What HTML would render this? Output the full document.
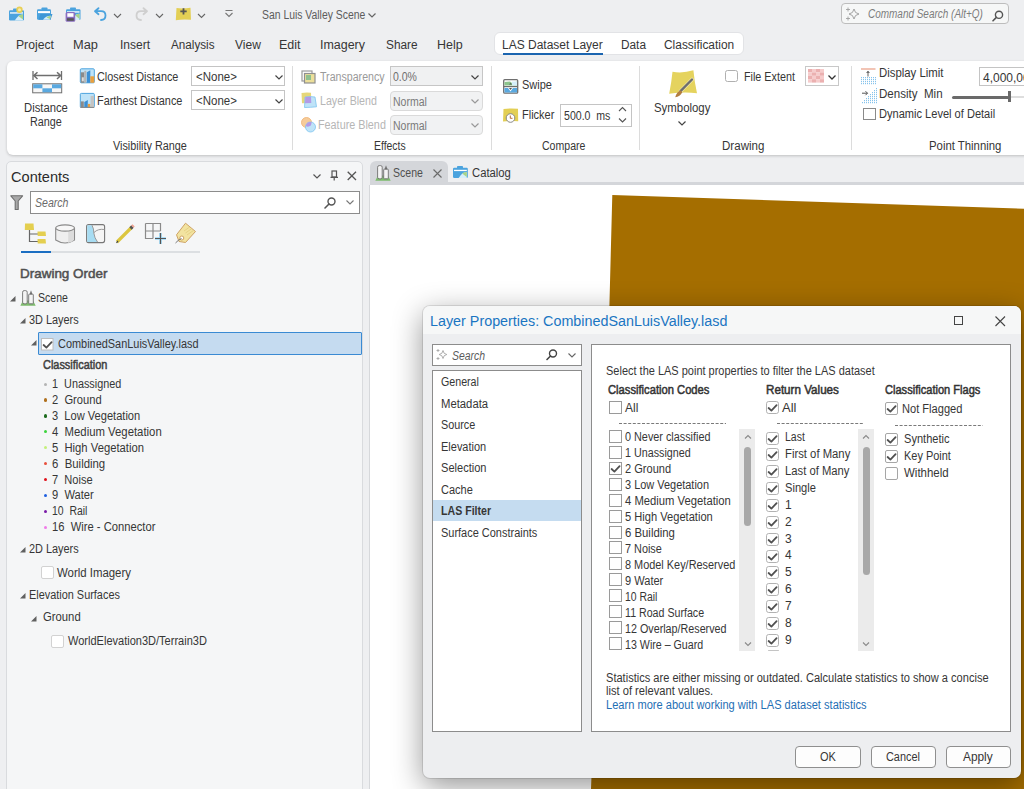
<!DOCTYPE html>
<html><head><meta charset="utf-8"><style>
html,body{margin:0;padding:0;}
body{width:1024px;height:789px;overflow:hidden;position:relative;background:#eeeff1;font-family:"Liberation Sans",sans-serif;}
.a{position:absolute;}
.t{white-space:pre;}
svg{overflow:visible}
</style></head><body>
<svg class="a" style="left:261.50px;top:1px;" width="139" height="24"><text x="0" y="18" style="white-space:pre" font-size="12" fill="#5c5c5c" textLength="103.30" lengthAdjust="spacingAndGlyphs">San Luis Valley Scene</text></svg>
<svg class="a" style="left:368px;top:13px" width="8" height="5" viewBox="0 0 8 5"><path d="M0.5 0.5 L4 4 L7.5 0.5" fill="none" stroke="#666" stroke-width="1.2"/></svg>
<div class="a" style="left:841px;top:3px;width:168px;height:21px;box-sizing:border-box;border:1px solid #bdbdbd;border-radius:4px;background:#f6f7f7;"></div>
<svg class="a" style="left:867.90px;top:0px;" width="158" height="24"><text x="0" y="18" style="white-space:pre" font-size="12" fill="#7c7c7c" font-style="italic" textLength="114.90" lengthAdjust="spacingAndGlyphs">Command Search (Alt+Q)</text></svg>
<svg class="a" style="left:16.10px;top:31px;" width="58" height="24"><text x="0" y="18" style="white-space:pre" font-size="12" fill="#363636" textLength="37.90" lengthAdjust="spacingAndGlyphs">Project</text></svg>
<svg class="a" style="left:73.10px;top:31px;" width="45" height="24"><text x="0" y="18" style="white-space:pre" font-size="12" fill="#363636" textLength="24.90" lengthAdjust="spacingAndGlyphs">Map</text></svg>
<svg class="a" style="left:119.60px;top:31px;" width="50" height="24"><text x="0" y="18" style="white-space:pre" font-size="12" fill="#363636">Insert</text></svg>
<svg class="a" style="left:170.80px;top:31px;" width="65" height="24"><text x="0" y="18" style="white-space:pre" font-size="12" fill="#363636" textLength="43.50" lengthAdjust="spacingAndGlyphs">Analysis</text></svg>
<svg class="a" style="left:234.50px;top:31px;" width="46" height="24"><text x="0" y="18" style="white-space:pre" font-size="12" fill="#363636">View</text></svg>
<svg class="a" style="left:279.30px;top:31px;" width="42" height="24"><text x="0" y="18" style="white-space:pre" font-size="12" fill="#363636" textLength="21.60" lengthAdjust="spacingAndGlyphs">Edit</text></svg>
<svg class="a" style="left:320.30px;top:31px;" width="65" height="24"><text x="0" y="18" style="white-space:pre" font-size="12" fill="#363636" textLength="45.00" lengthAdjust="spacingAndGlyphs">Imagery</text></svg>
<svg class="a" style="left:385.90px;top:31px;" width="52" height="24"><text x="0" y="18" style="white-space:pre" font-size="12" fill="#363636" textLength="31.60" lengthAdjust="spacingAndGlyphs">Share</text></svg>
<svg class="a" style="left:436.70px;top:31px;" width="46" height="24"><text x="0" y="18" style="white-space:pre" font-size="12" fill="#363636" textLength="25.70" lengthAdjust="spacingAndGlyphs">Help</text></svg>
<div class="a" style="left:494px;top:32px;width:250px;height:23px;box-sizing:border-box;border:1px solid #e2e3e6;border-radius:6px;background:#fff;"></div>
<svg class="a" style="left:501.80px;top:31px;" width="121" height="24"><text x="0" y="18" style="white-space:pre" font-size="12" fill="#363636">LAS Dataset Layer</text></svg>
<div class="a" style="left:502.5px;top:53px;width:100.5px;height:2px;background:#1b65b0;"></div>
<svg class="a" style="left:620.80px;top:31px;" width="45" height="24"><text x="0" y="18" style="white-space:pre" font-size="12" fill="#363636" textLength="25.00" lengthAdjust="spacingAndGlyphs">Data</text></svg>
<svg class="a" style="left:663.80px;top:31px;" width="91" height="24"><text x="0" y="18" style="white-space:pre" font-size="12" fill="#363636" textLength="70.20" lengthAdjust="spacingAndGlyphs">Classification</text></svg>
<div class="a" style="left:7px;top:60.5px;width:1040px;height:94px;background:#fff;border-radius:6px;box-shadow:0 1px 3px rgba(0,0,0,0.2);"></div>
<div class="a" style="left:292px;top:66px;width:1px;height:84px;background:#dcdcdc;"></div>
<div class="a" style="left:491px;top:66px;width:1px;height:84px;background:#dcdcdc;"></div>
<div class="a" style="left:639px;top:66px;width:1px;height:84px;background:#dcdcdc;"></div>
<div class="a" style="left:851px;top:66px;width:1px;height:84px;background:#dcdcdc;"></div>
<svg class="a" style="left:24.10px;top:94px;" width="67" height="24"><text x="0" y="18" style="white-space:pre" font-size="12" fill="#363636" textLength="43.90" lengthAdjust="spacingAndGlyphs">Distance</text></svg>
<svg class="a" style="left:30.10px;top:108px;" width="55" height="24"><text x="0" y="18" style="white-space:pre" font-size="12" fill="#363636" textLength="31.90" lengthAdjust="spacingAndGlyphs">Range</text></svg>
<svg class="a" style="left:96.60px;top:63px;" width="110" height="24"><text x="0" y="18" style="white-space:pre" font-size="12" fill="#363636" textLength="81.40" lengthAdjust="spacingAndGlyphs">Closest Distance</text></svg>
<svg class="a" style="left:96.60px;top:87px;" width="114" height="24"><text x="0" y="18" style="white-space:pre" font-size="12" fill="#363636" textLength="85.40" lengthAdjust="spacingAndGlyphs">Farthest Distance</text></svg>
<svg class="a" style="left:113.10px;top:132px;" width="102" height="24"><text x="0" y="18" style="white-space:pre" font-size="12" fill="#363636" textLength="73.90" lengthAdjust="spacingAndGlyphs">Visibility Range</text></svg>
<div class="a" style="left:191px;top:66px;width:94px;height:20px;box-sizing:border-box;border:1px solid #c4c4c4;background:#fff;"></div>
<div class="a" style="left:191px;top:90px;width:94px;height:20px;box-sizing:border-box;border:1px solid #c4c4c4;background:#fff;"></div>
<svg class="a" style="left:196.40px;top:63px;" width="63" height="24"><text x="0" y="18" style="white-space:pre" font-size="12" fill="#363636" textLength="40.90" lengthAdjust="spacingAndGlyphs">&lt;None&gt;</text></svg>
<svg class="a" style="left:196.40px;top:87px;" width="63" height="24"><text x="0" y="18" style="white-space:pre" font-size="12" fill="#363636" textLength="40.90" lengthAdjust="spacingAndGlyphs">&lt;None&gt;</text></svg>
<svg class="a" style="left:320.10px;top:63px;" width="93" height="24"><text x="0" y="18" style="white-space:pre" font-size="12" fill="#9a9a9a" textLength="64.60" lengthAdjust="spacingAndGlyphs">Transparency</text></svg>
<div class="a" style="left:390px;top:65.5px;width:93px;height:20.5px;box-sizing:border-box;border:1px solid #c6c6c6;background:#f0f1f2;"></div>
<svg class="a" style="left:393.40px;top:63px;" width="47" height="24"><text x="0" y="18" style="white-space:pre" font-size="12" fill="#6e6e6e" textLength="23.90" lengthAdjust="spacingAndGlyphs">0.0%</text></svg>
<svg class="a" style="left:320.10px;top:87px;" width="84" height="24"><text x="0" y="18" style="white-space:pre" font-size="12" fill="#b6b6b6" textLength="56.90" lengthAdjust="spacingAndGlyphs">Layer Blend</text></svg>
<div class="a" style="left:390px;top:91px;width:93px;height:19.5px;box-sizing:border-box;border:1px solid #dadada;border-radius:4px;background:#f1f2f3;"></div>
<svg class="a" style="left:392.60px;top:88px;" width="59" height="24"><text x="0" y="18" style="white-space:pre" font-size="12" fill="#7a7a7a" textLength="33.90" lengthAdjust="spacingAndGlyphs">Normal</text></svg>
<svg class="a" style="left:317.60px;top:111px;" width="95" height="24"><text x="0" y="18" style="white-space:pre" font-size="12" fill="#b6b6b6" textLength="67.90" lengthAdjust="spacingAndGlyphs">Feature Blend</text></svg>
<div class="a" style="left:390px;top:115px;width:93px;height:19.5px;box-sizing:border-box;border:1px solid #dadada;border-radius:4px;background:#f1f2f3;"></div>
<svg class="a" style="left:392.60px;top:112px;" width="59" height="24"><text x="0" y="18" style="white-space:pre" font-size="12" fill="#7a7a7a" textLength="33.90" lengthAdjust="spacingAndGlyphs">Normal</text></svg>
<svg class="a" style="left:374.40px;top:132px;" width="56" height="24"><text x="0" y="18" style="white-space:pre" font-size="12" fill="#363636" textLength="31.60" lengthAdjust="spacingAndGlyphs">Effects</text></svg>
<svg class="a" style="left:522.10px;top:71px;" width="53" height="24"><text x="0" y="18" style="white-space:pre" font-size="12" fill="#363636" textLength="29.90" lengthAdjust="spacingAndGlyphs">Swipe</text></svg>
<svg class="a" style="left:522.10px;top:101px;" width="55" height="24"><text x="0" y="18" style="white-space:pre" font-size="12" fill="#363636" textLength="32.40" lengthAdjust="spacingAndGlyphs">Flicker</text></svg>
<div class="a" style="left:560px;top:104px;width:71.5px;height:22.5px;box-sizing:border-box;border:1px solid #c4c4c4;background:#fff;"></div>
<svg class="a" style="left:564.10px;top:102px;" width="73" height="24"><text x="0" y="18" style="white-space:pre" font-size="12" fill="#363636" textLength="46.40" lengthAdjust="spacingAndGlyphs">500.0  ms</text></svg>
<svg class="a" style="left:541.60px;top:132px;" width="69" height="24"><text x="0" y="18" style="white-space:pre" font-size="12" fill="#363636" textLength="43.40" lengthAdjust="spacingAndGlyphs">Compare</text></svg>
<svg class="a" style="left:654.10px;top:94px;" width="79" height="24"><text x="0" y="18" style="white-space:pre" font-size="12" fill="#363636" textLength="56.40" lengthAdjust="spacingAndGlyphs">Symbology</text></svg>
<div class="a" style="left:725.3px;top:69.5px;width:12.7px;height:12.7px;box-sizing:border-box;border:1px solid #b0b0b0;background:#fff;border-radius:2.5px;"></div>
<svg class="a" style="left:743.60px;top:63px;" width="77" height="24"><text x="0" y="18" style="white-space:pre" font-size="12" fill="#363636" textLength="50.90" lengthAdjust="spacingAndGlyphs">File Extent</text></svg>
<div class="a" style="left:805px;top:66px;width:33.5px;height:19.5px;box-sizing:border-box;border:1px solid #c8c8c8;background:#fff;"></div>
<svg class="a" style="left:722.10px;top:132px;" width="64" height="24"><text x="0" y="18" style="white-space:pre" font-size="12" fill="#363636" textLength="42.40" lengthAdjust="spacingAndGlyphs">Drawing</text></svg>
<svg class="a" style="left:879.10px;top:59px;" width="88" height="24"><text x="0" y="18" style="white-space:pre" font-size="12" fill="#363636" textLength="64.40" lengthAdjust="spacingAndGlyphs">Display Limit</text></svg>
<svg class="a" style="left:879.10px;top:80px;" width="86" height="24"><text x="0" y="18" style="white-space:pre" font-size="12" fill="#363636" textLength="63.60" lengthAdjust="spacingAndGlyphs">Density  Min</text></svg>
<div class="a" style="left:863px;top:107.5px;width:13px;height:12.5px;box-sizing:border-box;border:1px solid #8a8a8a;background:#fff;"></div>
<svg class="a" style="left:879.10px;top:100px;" width="146" height="24"><text x="0" y="18" style="white-space:pre" font-size="12" fill="#363636" textLength="116.20" lengthAdjust="spacingAndGlyphs">Dynamic Level of Detail</text></svg>
<div class="a" style="left:979px;top:66.8px;width:60px;height:19.5px;box-sizing:border-box;border:1px solid #c4c4c4;background:#fff;"></div>
<svg class="a" style="left:983.10px;top:64px;" width="73" height="24"><text x="0" y="18" style="white-space:pre" font-size="12" fill="#363636">4,000,000</text></svg>
<div class="a" style="left:952px;top:95.5px;width:57px;height:3px;background:#6a6a6a;border-radius:1.5px;"></div>
<div class="a" style="left:1010px;top:96px;width:20px;height:2px;background:#dedede;"></div>
<div class="a" style="left:1008px;top:91px;width:3.2px;height:11.2px;background:#6a6a6a;"></div>
<svg class="a" style="left:928.60px;top:132px;" width="96" height="24"><text x="0" y="18" style="white-space:pre" font-size="12" fill="#363636" textLength="72.40" lengthAdjust="spacingAndGlyphs">Point Thinning</text></svg>
<div class="a" style="left:6px;top:161px;width:357px;height:640px;box-sizing:border-box;border:1px solid #d9dbde;border-radius:5px 5px 0 0;background:#f5f6f7;"></div>
<svg class="a" style="left:11.30px;top:160px;" width="80" height="30"><text x="0" y="22" style="white-space:pre" font-size="15" fill="#2b2b2b" textLength="58.40" lengthAdjust="spacingAndGlyphs">Contents</text></svg>
<div class="a" style="left:30px;top:191px;width:330px;height:22.5px;box-sizing:border-box;border:1px solid #8c8c8c;background:#fff;"></div>
<svg class="a" style="left:34.50px;top:189px;" width="58" height="24"><text x="0" y="18" style="white-space:pre" font-size="12" fill="#6a6a6a" font-style="italic" textLength="33.50" lengthAdjust="spacingAndGlyphs">Search</text></svg>
<div class="a" style="left:20.6px;top:250.8px;width:30px;height:2.5px;background:#1b6ec2;"></div>
<div class="a" style="left:50.6px;top:251px;width:149.4px;height:2px;background:#dcdfe2;"></div>
<svg class="a" style="left:19.90px;top:259px;" width="108" height="26"><text x="0" y="19" style="white-space:pre" font-size="13" fill="#505050" textLength="87.50" lengthAdjust="spacingAndGlyphs" stroke="#505050" stroke-width="0.5">Drawing Order</text></svg>
<svg class="a" style="left:38.40px;top:284px;" width="54" height="24"><text x="0" y="18" style="white-space:pre" font-size="12" fill="#363636" textLength="29.90" lengthAdjust="spacingAndGlyphs">Scene</text></svg>
<svg class="a" style="left:29.10px;top:306px;" width="75" height="24"><text x="0" y="18" style="white-space:pre" font-size="12" fill="#363636" textLength="49.70" lengthAdjust="spacingAndGlyphs">3D Layers</text></svg>
<div class="a" style="left:38.2px;top:331.6px;width:323.5px;height:23px;box-sizing:border-box;border:1px solid #3a8ad3;background:#c5dbf0;border-radius:1px;"></div>
<svg class="a" style="left:57.50px;top:330px;" width="174" height="24"><text x="0" y="18" style="white-space:pre" font-size="12" fill="#363636" textLength="140.50" lengthAdjust="spacingAndGlyphs">CombinedSanLuisValley.lasd</text></svg>
<svg class="a" style="left:42.70px;top:351px;" width="91" height="24"><text x="0" y="18" style="white-space:pre" font-size="12" fill="#404040" textLength="64.30" lengthAdjust="spacingAndGlyphs" stroke="#404040" stroke-width="0.5">Classification</text></svg>
<div class="a" style="left:44px;top:382.6px;width:3.2px;height:3.2px;background:#b4b4b4;border-radius:50%;"></div>
<svg class="a" style="left:52.10px;top:370px;" width="97" height="24"><text x="0" y="18" style="white-space:pre" font-size="12" fill="#363636" textLength="69.30" lengthAdjust="spacingAndGlyphs">1  Unassigned</text></svg>
<div class="a" style="left:44px;top:398.40000000000003px;width:3.2px;height:3.2px;background:#b0701d;border-radius:50%;"></div>
<svg class="a" style="left:52.10px;top:386px;" width="73" height="24"><text x="0" y="18" style="white-space:pre" font-size="12" fill="#363636" textLength="49.70" lengthAdjust="spacingAndGlyphs">2  Ground</text></svg>
<div class="a" style="left:44px;top:414.40000000000003px;width:3.2px;height:3.2px;background:#1d6b1d;border-radius:50%;"></div>
<svg class="a" style="left:52.10px;top:402px;" width="115" height="24"><text x="0" y="18" style="white-space:pre" font-size="12" fill="#363636" textLength="88.20" lengthAdjust="spacingAndGlyphs">3  Low Vegetation</text></svg>
<div class="a" style="left:44px;top:430.3px;width:3.2px;height:3.2px;background:#3cd43c;border-radius:50%;"></div>
<svg class="a" style="left:52.10px;top:418px;" width="136" height="24"><text x="0" y="18" style="white-space:pre" font-size="12" fill="#363636" textLength="109.70" lengthAdjust="spacingAndGlyphs">4  Medium Vegetation</text></svg>
<div class="a" style="left:44px;top:446.2px;width:3.2px;height:3.2px;background:#c4f07a;border-radius:50%;"></div>
<svg class="a" style="left:52.10px;top:434px;" width="118" height="24"><text x="0" y="18" style="white-space:pre" font-size="12" fill="#363636" textLength="91.90" lengthAdjust="spacingAndGlyphs">5  High Vegetation</text></svg>
<div class="a" style="left:44px;top:462.1px;width:3.2px;height:3.2px;background:#e8503c;border-radius:50%;"></div>
<svg class="a" style="left:52.10px;top:450px;" width="76" height="24"><text x="0" y="18" style="white-space:pre" font-size="12" fill="#363636" textLength="53.20" lengthAdjust="spacingAndGlyphs">6  Building</text></svg>
<div class="a" style="left:44px;top:478.0px;width:3.2px;height:3.2px;background:#e0101a;border-radius:50%;"></div>
<svg class="a" style="left:52.10px;top:466px;" width="64" height="24"><text x="0" y="18" style="white-space:pre" font-size="12" fill="#363636" textLength="40.70" lengthAdjust="spacingAndGlyphs">7  Noise</text></svg>
<div class="a" style="left:44px;top:493.90000000000003px;width:3.2px;height:3.2px;background:#1e5fe0;border-radius:50%;"></div>
<svg class="a" style="left:52.10px;top:481px;" width="65" height="24"><text x="0" y="18" style="white-space:pre" font-size="12" fill="#363636" textLength="41.70" lengthAdjust="spacingAndGlyphs">9  Water</text></svg>
<div class="a" style="left:44px;top:509.8px;width:3.2px;height:3.2px;background:#7a1aa8;border-radius:50%;"></div>
<svg class="a" style="left:52.10px;top:497px;" width="61" height="24"><text x="0" y="18" style="white-space:pre" font-size="12" fill="#363636" textLength="35.40" lengthAdjust="spacingAndGlyphs">10  Rail</text></svg>
<div class="a" style="left:44px;top:525.8px;width:3.2px;height:3.2px;background:#f07ae8;border-radius:50%;"></div>
<svg class="a" style="left:52.10px;top:513px;" width="131" height="24"><text x="0" y="18" style="white-space:pre" font-size="12" fill="#363636" textLength="103.40" lengthAdjust="spacingAndGlyphs">16  Wire - Connector</text></svg>
<svg class="a" style="left:29.10px;top:535px;" width="75" height="24"><text x="0" y="18" style="white-space:pre" font-size="12" fill="#363636" textLength="49.70" lengthAdjust="spacingAndGlyphs">2D Layers</text></svg>
<div class="a" style="left:40.5px;top:566px;width:13px;height:13px;box-sizing:border-box;border:1px solid #d2d2d2;background:#fff;border-radius:2px;"></div>
<svg class="a" style="left:56.90px;top:559px;" width="98" height="24"><text x="0" y="18" style="white-space:pre" font-size="12" fill="#363636" textLength="73.90" lengthAdjust="spacingAndGlyphs">World Imagery</text></svg>
<svg class="a" style="left:29.10px;top:581px;" width="120" height="24"><text x="0" y="18" style="white-space:pre" font-size="12" fill="#363636" textLength="90.90" lengthAdjust="spacingAndGlyphs">Elevation Surfaces</text></svg>
<svg class="a" style="left:42.50px;top:603px;" width="60" height="24"><text x="0" y="18" style="white-space:pre" font-size="12" fill="#363636" textLength="37.70" lengthAdjust="spacingAndGlyphs">Ground</text></svg>
<div class="a" style="left:50.6px;top:634.8px;width:13px;height:13px;box-sizing:border-box;border:1px solid #d2d2d2;background:#fff;border-radius:2px;"></div>
<svg class="a" style="left:67.80px;top:627px;" width="171" height="24"><text x="0" y="18" style="white-space:pre" font-size="12" fill="#363636" textLength="138.90" lengthAdjust="spacingAndGlyphs">WorldElevation3D/Terrain3D</text></svg>
<div class="a" style="left:369.5px;top:161.3px;width:78.2px;height:21px;background:#d4d6da;border-radius:6px 6px 0 0;"></div>
<div class="a" style="left:370px;top:182px;width:660px;height:3px;background:#d4d6da;"></div>
<svg class="a" style="left:393.10px;top:159px;" width="54" height="24"><text x="0" y="18" style="white-space:pre" font-size="12" fill="#505050" textLength="29.90" lengthAdjust="spacingAndGlyphs">Scene</text></svg>
<svg class="a" style="left:472.10px;top:159px;" width="61" height="24"><text x="0" y="18" style="white-space:pre" font-size="12" fill="#363636" textLength="38.90" lengthAdjust="spacingAndGlyphs">Catalog</text></svg>
<div class="a" style="left:369px;top:185px;width:660px;height:610px;background:#fff;border-left:1px solid #d6d8db;"></div>
<svg class="a" style="left:0px;top:0px" width="1024" height="789" viewBox="0 0 1024 789"><polygon points="612.3,195 1024,208.8 1024,789 591,789 608.5,340" fill="#a56e00"/></svg>
<div class="a" style="left:422.5px;top:305.5px;width:598.5px;height:472.5px;border-radius:7px;background:#edeef0;box-shadow:0 8px 30px rgba(0,0,0,0.42), 0 0 0 1px rgba(0,0,0,0.10);"></div>
<div class="a" style="left:422.5px;top:305.5px;width:598.5px;height:28.5px;border-radius:7px 7px 0 0;background:#f6f7f7;"></div>
<svg class="a" style="left:430.40px;top:305px;" width="317" height="28"><text x="0" y="21" style="white-space:pre" font-size="14" fill="#1a75c2" textLength="297.40" lengthAdjust="spacingAndGlyphs">Layer Properties: CombinedSanLuisValley.lasd</text></svg>
<div class="a" style="left:953.6px;top:315.8px;width:9.4px;height:9.2px;box-sizing:border-box;border:1px solid #444;"></div>
<div class="a" style="left:432.3px;top:344.2px;width:149.7px;height:22px;box-sizing:border-box;border:1px solid #8c8c8c;background:#fff;"></div>
<svg class="a" style="left:451.70px;top:342px;" width="58" height="24"><text x="0" y="18" style="white-space:pre" font-size="12" fill="#5a5a5a" font-style="italic" textLength="33.10" lengthAdjust="spacingAndGlyphs">Search</text></svg>
<div class="a" style="left:432.3px;top:370px;width:149.7px;height:361.7px;box-sizing:border-box;border:1px solid #8c8c8c;background:#fff;"></div>
<div class="a" style="left:433.3px;top:500.2px;width:147.7px;height:20.4px;background:#c5dcf0;"></div>
<svg class="a" style="left:441.40px;top:368px;" width="63" height="24"><text x="0" y="18" style="white-space:pre" font-size="12" fill="#363636" textLength="37.90" lengthAdjust="spacingAndGlyphs">General</text></svg>
<svg class="a" style="left:441.40px;top:390px;" width="70" height="24"><text x="0" y="18" style="white-space:pre" font-size="12" fill="#363636" textLength="47.10" lengthAdjust="spacingAndGlyphs">Metadata</text></svg>
<svg class="a" style="left:441.40px;top:411px;" width="58" height="24"><text x="0" y="18" style="white-space:pre" font-size="12" fill="#363636" textLength="34.30" lengthAdjust="spacingAndGlyphs">Source</text></svg>
<svg class="a" style="left:441.40px;top:433px;" width="69" height="24"><text x="0" y="18" style="white-space:pre" font-size="12" fill="#363636" textLength="45.20" lengthAdjust="spacingAndGlyphs">Elevation</text></svg>
<svg class="a" style="left:441.40px;top:454px;" width="69" height="24"><text x="0" y="18" style="white-space:pre" font-size="12" fill="#363636" textLength="45.50" lengthAdjust="spacingAndGlyphs">Selection</text></svg>
<svg class="a" style="left:441.40px;top:476px;" width="55" height="24"><text x="0" y="18" style="white-space:pre" font-size="12" fill="#363636" textLength="31.80" lengthAdjust="spacingAndGlyphs">Cache</text></svg>
<svg class="a" style="left:441.40px;top:497px;" width="77" height="24"><text x="0" y="18" style="white-space:pre" font-size="12" fill="#363636" font-weight="700" textLength="50.10" lengthAdjust="spacingAndGlyphs">LAS Filter</text></svg>
<svg class="a" style="left:441.40px;top:519px;" width="125" height="24"><text x="0" y="18" style="white-space:pre" font-size="12" fill="#363636" textLength="96.30" lengthAdjust="spacingAndGlyphs">Surface Constraints</text></svg>
<div class="a" style="left:591.3px;top:344.4px;width:419.9px;height:387.2px;box-sizing:border-box;border:1px solid #8c8c8c;background:#fff;"></div>
<svg class="a" style="left:606.20px;top:357px;" width="314" height="24"><text x="0" y="18" style="white-space:pre" font-size="12" fill="#363636" textLength="268.70" lengthAdjust="spacingAndGlyphs">Select the LAS point properties to filter the LAS dataset</text></svg>
<svg class="a" style="left:608.10px;top:376px;" width="129" height="24"><text x="0" y="18" style="white-space:pre" font-size="12" fill="#363636" textLength="101.40" lengthAdjust="spacingAndGlyphs" stroke="#323232" stroke-width="0.5">Classification Codes</text></svg>
<svg class="a" style="left:765.90px;top:376px;" width="95" height="24"><text x="0" y="18" style="white-space:pre" font-size="12" fill="#363636" textLength="72.90" lengthAdjust="spacingAndGlyphs" stroke="#323232" stroke-width="0.5">Return Values</text></svg>
<svg class="a" style="left:884.60px;top:376px;" width="123" height="24"><text x="0" y="18" style="white-space:pre" font-size="12" fill="#363636" textLength="95.40" lengthAdjust="spacingAndGlyphs" stroke="#323232" stroke-width="0.5">Classification Flags</text></svg>
<svg class="a" style="left:608.7px;top:401px" width="13" height="13" viewBox="0 0 13 13"><rect x="0.5" y="0.5" width="12" height="12" rx="0" fill="#fff" stroke="#9a9a9a" stroke-width="1"/></svg>
<svg class="a" style="left:625.10px;top:394px;" width="34" height="24"><text x="0" y="18" style="white-space:pre" font-size="12" fill="#363636">All</text></svg>
<svg class="a" style="left:766.4px;top:401px" width="13" height="13" viewBox="0 0 13 13"><rect x="0.5" y="0.5" width="12" height="12" rx="2.2" fill="#fff" stroke="#b2b2b2" stroke-width="1"/><path d="M2.6 7 L5.4 9.6 L10.6 4.2" fill="none" stroke="#505050" stroke-width="1.8" stroke-linecap="round" stroke-linejoin="round"/></svg>
<svg class="a" style="left:782.00px;top:394px;" width="34" height="24"><text x="0" y="18" style="white-space:pre" font-size="12" fill="#363636" textLength="14.40" lengthAdjust="spacingAndGlyphs">All</text></svg>
<svg class="a" style="left:885.3px;top:402px" width="13" height="13" viewBox="0 0 13 13"><rect x="0.5" y="0.5" width="12" height="12" rx="1.5" fill="#fff" stroke="#a6a6a6" stroke-width="1"/><path d="M2.6 7 L5.4 9.6 L10.6 4.2" fill="none" stroke="#505050" stroke-width="1.8" stroke-linecap="round" stroke-linejoin="round"/></svg>
<svg class="a" style="left:902.10px;top:395px;" width="85" height="24"><text x="0" y="18" style="white-space:pre" font-size="12" fill="#363636" textLength="60.40" lengthAdjust="spacingAndGlyphs">Not Flagged</text></svg>
<svg class="a" style="left:619px;top:423px" width="107" height="1" viewBox="0 0 107 1"><line x1="0" y1="0.5" x2="107" y2="0.5" stroke="#7a7a7a" stroke-width="1.2" stroke-dasharray="3 1.6"/></svg>
<svg class="a" style="left:776.5px;top:423px" width="87.0" height="1" viewBox="0 0 87.0 1"><line x1="0" y1="0.5" x2="87.0" y2="0.5" stroke="#7a7a7a" stroke-width="1.2" stroke-dasharray="3 1.6"/></svg>
<svg class="a" style="left:895.3px;top:424.5px" width="87.80000000000007" height="1" viewBox="0 0 87.80000000000007 1"><line x1="0" y1="0.5" x2="87.80000000000007" y2="0.5" stroke="#7a7a7a" stroke-width="1.2" stroke-dasharray="3 1.6"/></svg>
<svg class="a" style="left:608.7px;top:430px" width="13" height="13" viewBox="0 0 13 13"><rect x="0.5" y="0.5" width="12" height="12" rx="0" fill="#fff" stroke="#9a9a9a" stroke-width="1"/></svg>
<svg class="a" style="left:625.30px;top:423px;" width="115" height="24"><text x="0" y="18" style="white-space:pre" font-size="12" fill="#363636" textLength="85.50" lengthAdjust="spacingAndGlyphs">0 Never classified</text></svg>
<svg class="a" style="left:608.7px;top:446px" width="13" height="13" viewBox="0 0 13 13"><rect x="0.5" y="0.5" width="12" height="12" rx="0" fill="#fff" stroke="#9a9a9a" stroke-width="1"/></svg>
<svg class="a" style="left:625.30px;top:439px;" width="93" height="24"><text x="0" y="18" style="white-space:pre" font-size="12" fill="#363636" textLength="65.70" lengthAdjust="spacingAndGlyphs">1 Unassigned</text></svg>
<svg class="a" style="left:608.7px;top:462px" width="13" height="13" viewBox="0 0 13 13"><rect x="0.5" y="0.5" width="12" height="12" rx="0" fill="#fff" stroke="#9a9a9a" stroke-width="1"/><path d="M2.6 7 L5.4 9.6 L10.6 4.2" fill="none" stroke="#505050" stroke-width="1.8" stroke-linecap="round" stroke-linejoin="round"/></svg>
<svg class="a" style="left:625.30px;top:455px;" width="70" height="24"><text x="0" y="18" style="white-space:pre" font-size="12" fill="#363636" textLength="46.10" lengthAdjust="spacingAndGlyphs">2 Ground</text></svg>
<svg class="a" style="left:608.7px;top:478px" width="13" height="13" viewBox="0 0 13 13"><rect x="0.5" y="0.5" width="12" height="12" rx="0" fill="#fff" stroke="#9a9a9a" stroke-width="1"/></svg>
<svg class="a" style="left:625.30px;top:471px;" width="112" height="24"><text x="0" y="18" style="white-space:pre" font-size="12" fill="#363636" textLength="84.00" lengthAdjust="spacingAndGlyphs">3 Low Vegetation</text></svg>
<svg class="a" style="left:608.7px;top:494px" width="13" height="13" viewBox="0 0 13 13"><rect x="0.5" y="0.5" width="12" height="12" rx="0" fill="#fff" stroke="#9a9a9a" stroke-width="1"/></svg>
<svg class="a" style="left:625.30px;top:487px;" width="133" height="24"><text x="0" y="18" style="white-space:pre" font-size="12" fill="#363636" textLength="105.90" lengthAdjust="spacingAndGlyphs">4 Medium Vegetation</text></svg>
<svg class="a" style="left:608.7px;top:510px" width="13" height="13" viewBox="0 0 13 13"><rect x="0.5" y="0.5" width="12" height="12" rx="0" fill="#fff" stroke="#9a9a9a" stroke-width="1"/></svg>
<svg class="a" style="left:625.30px;top:503px;" width="115" height="24"><text x="0" y="18" style="white-space:pre" font-size="12" fill="#363636" textLength="87.80" lengthAdjust="spacingAndGlyphs">5 High Vegetation</text></svg>
<svg class="a" style="left:608.7px;top:526px" width="13" height="13" viewBox="0 0 13 13"><rect x="0.5" y="0.5" width="12" height="12" rx="0" fill="#fff" stroke="#9a9a9a" stroke-width="1"/></svg>
<svg class="a" style="left:625.30px;top:519px;" width="73" height="24"><text x="0" y="18" style="white-space:pre" font-size="12" fill="#363636" textLength="49.90" lengthAdjust="spacingAndGlyphs">6 Building</text></svg>
<svg class="a" style="left:608.7px;top:541px" width="13" height="13" viewBox="0 0 13 13"><rect x="0.5" y="0.5" width="12" height="12" rx="0" fill="#fff" stroke="#9a9a9a" stroke-width="1"/></svg>
<svg class="a" style="left:625.30px;top:535px;" width="61" height="24"><text x="0" y="18" style="white-space:pre" font-size="12" fill="#363636" textLength="36.80" lengthAdjust="spacingAndGlyphs">7 Noise</text></svg>
<svg class="a" style="left:608.7px;top:557px" width="13" height="13" viewBox="0 0 13 13"><rect x="0.5" y="0.5" width="12" height="12" rx="0" fill="#fff" stroke="#9a9a9a" stroke-width="1"/></svg>
<svg class="a" style="left:625.30px;top:551px;" width="141" height="24"><text x="0" y="18" style="white-space:pre" font-size="12" fill="#363636" textLength="110.30" lengthAdjust="spacingAndGlyphs">8 Model Key/Reserved</text></svg>
<svg class="a" style="left:608.7px;top:573px" width="13" height="13" viewBox="0 0 13 13"><rect x="0.5" y="0.5" width="12" height="12" rx="0" fill="#fff" stroke="#9a9a9a" stroke-width="1"/></svg>
<svg class="a" style="left:625.30px;top:567px;" width="62" height="24"><text x="0" y="18" style="white-space:pre" font-size="12" fill="#363636" textLength="38.30" lengthAdjust="spacingAndGlyphs">9 Water</text></svg>
<svg class="a" style="left:608.7px;top:589px" width="13" height="13" viewBox="0 0 13 13"><rect x="0.5" y="0.5" width="12" height="12" rx="0" fill="#fff" stroke="#9a9a9a" stroke-width="1"/></svg>
<svg class="a" style="left:625.30px;top:583px;" width="57" height="24"><text x="0" y="18" style="white-space:pre" font-size="12" fill="#363636" textLength="32.40" lengthAdjust="spacingAndGlyphs">10 Rail</text></svg>
<svg class="a" style="left:608.7px;top:605px" width="13" height="13" viewBox="0 0 13 13"><rect x="0.5" y="0.5" width="12" height="12" rx="0" fill="#fff" stroke="#9a9a9a" stroke-width="1"/></svg>
<svg class="a" style="left:625.30px;top:599px;" width="109" height="24"><text x="0" y="18" style="white-space:pre" font-size="12" fill="#363636" textLength="79.10" lengthAdjust="spacingAndGlyphs">11 Road Surface</text></svg>
<svg class="a" style="left:608.7px;top:621px" width="13" height="13" viewBox="0 0 13 13"><rect x="0.5" y="0.5" width="12" height="12" rx="0" fill="#fff" stroke="#9a9a9a" stroke-width="1"/></svg>
<svg class="a" style="left:625.30px;top:615px;" width="133" height="24"><text x="0" y="18" style="white-space:pre" font-size="12" fill="#363636" textLength="101.50" lengthAdjust="spacingAndGlyphs">12 Overlap/Reserved</text></svg>
<svg class="a" style="left:608.7px;top:637px" width="13" height="13" viewBox="0 0 13 13"><rect x="0.5" y="0.5" width="12" height="12" rx="0" fill="#fff" stroke="#9a9a9a" stroke-width="1"/></svg>
<svg class="a" style="left:625.30px;top:631px;" width="108" height="24"><text x="0" y="18" style="white-space:pre" font-size="12" fill="#363636" textLength="78.20" lengthAdjust="spacingAndGlyphs">13 Wire – Guard</text></svg>
<div class="a" style="left:739.4px;top:429.4px;width:15.7px;height:221.6px;background:#ebebeb;"></div>
<div class="a" style="left:743.7px;top:446.9px;width:7.3px;height:78.7px;background:#a8a8a8;border-radius:4px;"></div>
<svg class="a" style="left:742.5px;top:434px" width="10" height="6" viewBox="0 0 10 6"><path d="M2 4.5 L5 1.5 L8 4.5" fill="none" stroke="#8a8a8a" stroke-width="1.1"/></svg>
<svg class="a" style="left:742.5px;top:641px" width="10" height="6" viewBox="0 0 10 6"><path d="M2 1.5 L5 4.5 L8 1.5" fill="none" stroke="#8a8a8a" stroke-width="1.1"/></svg>
<svg class="a" style="left:766.4px;top:432px" width="13" height="13" viewBox="0 0 13 13"><rect x="0.5" y="0.5" width="12" height="12" rx="2.2" fill="#fff" stroke="#b2b2b2" stroke-width="1"/><path d="M2.6 7 L5.4 9.6 L10.6 4.2" fill="none" stroke="#505050" stroke-width="1.8" stroke-linecap="round" stroke-linejoin="round"/></svg>
<svg class="a" style="left:784.50px;top:423px;" width="43" height="24"><text x="0" y="18" style="white-space:pre" font-size="12" fill="#363636" textLength="19.80" lengthAdjust="spacingAndGlyphs">Last</text></svg>
<svg class="a" style="left:766.4px;top:448px" width="13" height="13" viewBox="0 0 13 13"><rect x="0.5" y="0.5" width="12" height="12" rx="2.2" fill="#fff" stroke="#b2b2b2" stroke-width="1"/><path d="M2.6 7 L5.4 9.6 L10.6 4.2" fill="none" stroke="#505050" stroke-width="1.8" stroke-linecap="round" stroke-linejoin="round"/></svg>
<svg class="a" style="left:784.50px;top:440px;" width="89" height="24"><text x="0" y="18" style="white-space:pre" font-size="12" fill="#363636" textLength="65.30" lengthAdjust="spacingAndGlyphs">First of Many</text></svg>
<svg class="a" style="left:766.4px;top:465px" width="13" height="13" viewBox="0 0 13 13"><rect x="0.5" y="0.5" width="12" height="12" rx="2.2" fill="#fff" stroke="#b2b2b2" stroke-width="1"/><path d="M2.6 7 L5.4 9.6 L10.6 4.2" fill="none" stroke="#505050" stroke-width="1.8" stroke-linecap="round" stroke-linejoin="round"/></svg>
<svg class="a" style="left:784.50px;top:457px;" width="89" height="24"><text x="0" y="18" style="white-space:pre" font-size="12" fill="#363636" textLength="64.40" lengthAdjust="spacingAndGlyphs">Last of Many</text></svg>
<svg class="a" style="left:766.4px;top:482px" width="13" height="13" viewBox="0 0 13 13"><rect x="0.5" y="0.5" width="12" height="12" rx="2.2" fill="#fff" stroke="#b2b2b2" stroke-width="1"/><path d="M2.6 7 L5.4 9.6 L10.6 4.2" fill="none" stroke="#505050" stroke-width="1.8" stroke-linecap="round" stroke-linejoin="round"/></svg>
<svg class="a" style="left:784.50px;top:474px;" width="53" height="24"><text x="0" y="18" style="white-space:pre" font-size="12" fill="#363636" textLength="30.90" lengthAdjust="spacingAndGlyphs">Single</text></svg>
<svg class="a" style="left:766.4px;top:499px" width="13" height="13" viewBox="0 0 13 13"><rect x="0.5" y="0.5" width="12" height="12" rx="2.2" fill="#fff" stroke="#b2b2b2" stroke-width="1"/><path d="M2.6 7 L5.4 9.6 L10.6 4.2" fill="none" stroke="#505050" stroke-width="1.8" stroke-linecap="round" stroke-linejoin="round"/></svg>
<svg class="a" style="left:784.50px;top:491px;" width="27" height="24"><text x="0" y="18" style="white-space:pre" font-size="12" fill="#363636">1</text></svg>
<svg class="a" style="left:766.4px;top:516px" width="13" height="13" viewBox="0 0 13 13"><rect x="0.5" y="0.5" width="12" height="12" rx="2.2" fill="#fff" stroke="#b2b2b2" stroke-width="1"/><path d="M2.6 7 L5.4 9.6 L10.6 4.2" fill="none" stroke="#505050" stroke-width="1.8" stroke-linecap="round" stroke-linejoin="round"/></svg>
<svg class="a" style="left:784.50px;top:508px;" width="27" height="24"><text x="0" y="18" style="white-space:pre" font-size="12" fill="#363636">2</text></svg>
<svg class="a" style="left:766.4px;top:533px" width="13" height="13" viewBox="0 0 13 13"><rect x="0.5" y="0.5" width="12" height="12" rx="2.2" fill="#fff" stroke="#b2b2b2" stroke-width="1"/><path d="M2.6 7 L5.4 9.6 L10.6 4.2" fill="none" stroke="#505050" stroke-width="1.8" stroke-linecap="round" stroke-linejoin="round"/></svg>
<svg class="a" style="left:784.50px;top:525px;" width="27" height="24"><text x="0" y="18" style="white-space:pre" font-size="12" fill="#363636">3</text></svg>
<svg class="a" style="left:766.4px;top:550px" width="13" height="13" viewBox="0 0 13 13"><rect x="0.5" y="0.5" width="12" height="12" rx="2.2" fill="#fff" stroke="#b2b2b2" stroke-width="1"/><path d="M2.6 7 L5.4 9.6 L10.6 4.2" fill="none" stroke="#505050" stroke-width="1.8" stroke-linecap="round" stroke-linejoin="round"/></svg>
<svg class="a" style="left:784.50px;top:541px;" width="27" height="24"><text x="0" y="18" style="white-space:pre" font-size="12" fill="#363636">4</text></svg>
<svg class="a" style="left:766.4px;top:566px" width="13" height="13" viewBox="0 0 13 13"><rect x="0.5" y="0.5" width="12" height="12" rx="2.2" fill="#fff" stroke="#b2b2b2" stroke-width="1"/><path d="M2.6 7 L5.4 9.6 L10.6 4.2" fill="none" stroke="#505050" stroke-width="1.8" stroke-linecap="round" stroke-linejoin="round"/></svg>
<svg class="a" style="left:784.50px;top:558px;" width="27" height="24"><text x="0" y="18" style="white-space:pre" font-size="12" fill="#363636">5</text></svg>
<svg class="a" style="left:766.4px;top:583px" width="13" height="13" viewBox="0 0 13 13"><rect x="0.5" y="0.5" width="12" height="12" rx="2.2" fill="#fff" stroke="#b2b2b2" stroke-width="1"/><path d="M2.6 7 L5.4 9.6 L10.6 4.2" fill="none" stroke="#505050" stroke-width="1.8" stroke-linecap="round" stroke-linejoin="round"/></svg>
<svg class="a" style="left:784.50px;top:575px;" width="27" height="24"><text x="0" y="18" style="white-space:pre" font-size="12" fill="#363636">6</text></svg>
<svg class="a" style="left:766.4px;top:600px" width="13" height="13" viewBox="0 0 13 13"><rect x="0.5" y="0.5" width="12" height="12" rx="2.2" fill="#fff" stroke="#b2b2b2" stroke-width="1"/><path d="M2.6 7 L5.4 9.6 L10.6 4.2" fill="none" stroke="#505050" stroke-width="1.8" stroke-linecap="round" stroke-linejoin="round"/></svg>
<svg class="a" style="left:784.50px;top:592px;" width="27" height="24"><text x="0" y="18" style="white-space:pre" font-size="12" fill="#363636">7</text></svg>
<svg class="a" style="left:766.4px;top:617px" width="13" height="13" viewBox="0 0 13 13"><rect x="0.5" y="0.5" width="12" height="12" rx="2.2" fill="#fff" stroke="#b2b2b2" stroke-width="1"/><path d="M2.6 7 L5.4 9.6 L10.6 4.2" fill="none" stroke="#505050" stroke-width="1.8" stroke-linecap="round" stroke-linejoin="round"/></svg>
<svg class="a" style="left:784.50px;top:609px;" width="27" height="24"><text x="0" y="18" style="white-space:pre" font-size="12" fill="#363636">8</text></svg>
<svg class="a" style="left:766.4px;top:634px" width="13" height="13" viewBox="0 0 13 13"><rect x="0.5" y="0.5" width="12" height="12" rx="2.2" fill="#fff" stroke="#b2b2b2" stroke-width="1"/><path d="M2.6 7 L5.4 9.6 L10.6 4.2" fill="none" stroke="#505050" stroke-width="1.8" stroke-linecap="round" stroke-linejoin="round"/></svg>
<svg class="a" style="left:784.50px;top:626px;" width="27" height="24"><text x="0" y="18" style="white-space:pre" font-size="12" fill="#363636">9</text></svg>
<div class="a" style="left:767.5px;top:650px;width:11px;height:1.3px;background:#c4c4c4;border-radius:1px;"></div>
<div class="a" style="left:858.3px;top:429.4px;width:15.4px;height:221.6px;background:#ebebeb;"></div>
<div class="a" style="left:862.6px;top:446.9px;width:7.6px;height:128.2px;background:#a8a8a8;border-radius:4px;"></div>
<svg class="a" style="left:861px;top:434px" width="10" height="6" viewBox="0 0 10 6"><path d="M2 4.5 L5 1.5 L8 4.5" fill="none" stroke="#8a8a8a" stroke-width="1.1"/></svg>
<svg class="a" style="left:861px;top:641px" width="10" height="6" viewBox="0 0 10 6"><path d="M2 1.5 L5 4.5 L8 1.5" fill="none" stroke="#8a8a8a" stroke-width="1.1"/></svg>
<svg class="a" style="left:885.3px;top:433px" width="13" height="13" viewBox="0 0 13 13"><rect x="0.5" y="0.5" width="12" height="12" rx="1.5" fill="#fff" stroke="#a6a6a6" stroke-width="1"/><path d="M2.6 7 L5.4 9.6 L10.6 4.2" fill="none" stroke="#505050" stroke-width="1.8" stroke-linecap="round" stroke-linejoin="round"/></svg>
<svg class="a" style="left:903.90px;top:425px;" width="69" height="24"><text x="0" y="18" style="white-space:pre" font-size="12" fill="#363636" textLength="45.50" lengthAdjust="spacingAndGlyphs">Synthetic</text></svg>
<svg class="a" style="left:885.3px;top:450px" width="13" height="13" viewBox="0 0 13 13"><rect x="0.5" y="0.5" width="12" height="12" rx="1.5" fill="#fff" stroke="#a6a6a6" stroke-width="1"/><path d="M2.6 7 L5.4 9.6 L10.6 4.2" fill="none" stroke="#505050" stroke-width="1.8" stroke-linecap="round" stroke-linejoin="round"/></svg>
<svg class="a" style="left:903.90px;top:442px;" width="71" height="24"><text x="0" y="18" style="white-space:pre" font-size="12" fill="#363636" textLength="46.90" lengthAdjust="spacingAndGlyphs">Key Point</text></svg>
<svg class="a" style="left:885.3px;top:467px" width="13" height="13" viewBox="0 0 13 13"><rect x="0.5" y="0.5" width="12" height="12" rx="1.5" fill="#fff" stroke="#a6a6a6" stroke-width="1"/></svg>
<svg class="a" style="left:903.90px;top:459px;" width="67" height="24"><text x="0" y="18" style="white-space:pre" font-size="12" fill="#363636" textLength="44.70" lengthAdjust="spacingAndGlyphs">Withheld</text></svg>
<svg class="a" style="left:606.00px;top:664px;" width="435" height="24"><text x="0" y="18" style="white-space:pre" font-size="12" fill="#363636" textLength="382.60" lengthAdjust="spacingAndGlyphs">Statistics are either missing or outdated. Calculate statistics to show a concise</text></svg>
<svg class="a" style="left:606.00px;top:677px;" width="135" height="24"><text x="0" y="18" style="white-space:pre" font-size="12" fill="#363636" textLength="107.20" lengthAdjust="spacingAndGlyphs">list of relevant values.</text></svg>
<svg class="a" style="left:606.00px;top:691px;" width="302" height="24"><text x="0" y="18" style="white-space:pre" font-size="12" fill="#1f6fb5" textLength="260.50" lengthAdjust="spacingAndGlyphs">Learn more about working with LAS dataset statistics</text></svg>
<div class="a" style="left:795px;top:746.2px;width:65.5px;height:22px;box-sizing:border-box;border:1px solid #8f8f8f;border-radius:4px;background:#fdfdfd;"></div>
<svg class="a" style="left:820.10px;top:743px;" width="37" height="24"><text x="0" y="18" style="white-space:pre" font-size="12" fill="#363636" textLength="15.90" lengthAdjust="spacingAndGlyphs">OK</text></svg>
<div class="a" style="left:870.5px;top:746.2px;width:65.10000000000002px;height:22px;box-sizing:border-box;border:1px solid #8f8f8f;border-radius:4px;background:#fdfdfd;"></div>
<svg class="a" style="left:885.60px;top:743px;" width="57" height="24"><text x="0" y="18" style="white-space:pre" font-size="12" fill="#363636" textLength="33.90" lengthAdjust="spacingAndGlyphs">Cancel</text></svg>
<div class="a" style="left:945.6px;top:746.2px;width:65.0px;height:22px;box-sizing:border-box;border:1px solid #8f8f8f;border-radius:4px;background:#fdfdfd;"></div>
<svg class="a" style="left:963.10px;top:743px;" width="50" height="24"><text x="0" y="18" style="white-space:pre" font-size="12" fill="#363636" textLength="29.70" lengthAdjust="spacingAndGlyphs">Apply</text></svg>
<svg class="a" style="left:0px;top:0px" width="130" height="26" viewBox="0 0 130 26"><g transform="translate(9,8.5)"><rect x="4" y="0" width="6" height="2.5" rx="0.8" fill="#4ba3de"/><rect x="0" y="1.8" width="15" height="10.2" rx="1.2" fill="#4ba3de"/><rect x="1" y="3.8" width="13" height="1.3" fill="#fff"/><path d="M5.7 12 Q9.75 5.4 14 6.0 L14 12 Z" fill="#d6eefa"/><path d="M9.3 7.4399999999999995 Q12.0 5.76 14 6.0 L14 11 Z" fill="#a8d48a"/></g><circle cx="19.5" cy="9.8" r="3.2" fill="#e8cf55"/><circle cx="19.5" cy="9.8" r="1.5" fill="#f6eab0"/><g transform="translate(37,7.5)"><rect x="4.5" y="0" width="6" height="2.5" rx="0.8" fill="#4ba3de"/><rect x="0" y="1.8" width="14" height="10.5" rx="1.2" fill="#4ba3de"/><rect x="1" y="3.6" width="12" height="2" fill="#fff"/><path d="M1.5 12.3 L3.5 6.5 L15.5 6.5 L13.5 12.3 Z" fill="#3e97d6"/><path d="M6 12.3 Q9 8 13.8 8.2 L12.8 12.3 Z" fill="#d6eefa"/><path d="M9.5 10 Q11.5 8.4 13.8 8.2 L13 11.5 Z" fill="#a8d48a"/></g><g transform="translate(66,7.5)"><rect x="4" y="0" width="6" height="2.5" rx="0.8" fill="#4ba3de"/><rect x="0" y="1.8" width="14.5" height="10.7" rx="1.2" fill="#4ba3de"/><rect x="1" y="3.8" width="12.5" height="1.3" fill="#fff"/><path d="M5.51 12.5 Q9.425 5.625 13.5 6.25 L13.5 12.5 Z" fill="#d6eefa"/><path d="M8.99 7.75 Q11.600000000000001 6.0 13.5 6.25 L13.5 11.5 Z" fill="#a8d48a"/></g><rect x="65.6" y="12" width="9.6" height="9.7" rx="1.5" fill="#8a6fc0"/><rect x="67.3" y="13.2" width="6.2" height="3.6" fill="#fff"/><rect x="67" y="18.2" width="6.8" height="2.6" fill="#555"/><path d="M95 11.2 L98.5 8.2 M95 11.2 L98.5 14.2 M95.3 11.2 L101 11.2 Q105.5 11.2 105.5 15.5 Q105.5 20 101 20" fill="none" stroke="#4ba3de" stroke-width="1.8" stroke-linecap="round"/><path d="M114 14 L117.5 17.5 L121 14" fill="none" stroke="#666" stroke-width="1.1"/></svg>
<svg class="a" style="left:130px;top:0px" width="120" height="26" viewBox="0 0 120 26"><path d="M17 11.2 L13.5 8.2 M17 11.2 L13.5 14.2 M16.7 11.2 L11 11.2 Q6.5 11.2 6.5 15.5 Q6.5 20 11 20" fill="none" stroke="#cfcfcf" stroke-width="1.8" stroke-linecap="round"/><path d="M26 14 L29.5 17.5 L33 14" fill="none" stroke="#666" stroke-width="1.1"/><path d="M46.5 8 Q52 9 60.5 7.8 L61 19.8 Q53 18.8 45.8 20.3 Z" fill="#e3cf55"/><path d="M53.5 8.2 L53.5 14.5 M50.3 11.3 L56.7 11.3" stroke="#555" stroke-width="1.8"/><path d="M68 14 L71.5 17.5 L75 14" fill="none" stroke="#666" stroke-width="1.1"/><path d="M95.5 10.5 L102.5 10.5 M95.5 13 L99 16.5 L102.5 13" fill="none" stroke="#777" stroke-width="1.1"/></svg>
<svg class="a" style="left:845px;top:7px" width="16" height="14" viewBox="0 0 16 14"><path d="M9 2 Q9.6 6.4 14 7 Q9.6 7.6 9 12 Q8.4 7.6 4 7 Q8.4 6.4 9 2 Z" fill="none" stroke="#9a9a9a" stroke-width="0.9"/><path d="M3 0.5 V4.5 M1 2.5 H5" stroke="#a0a0a0" stroke-width="0.9"/><path d="M3 9.5 V13.5 M1 11.5 H5" stroke="#a0a0a0" stroke-width="0.9"/></svg>
<svg class="a" style="left:992px;top:10px" width="12" height="12" viewBox="0 0 12 12"><circle cx="7" cy="4.8" r="3.6" fill="none" stroke="#555" stroke-width="1.4"/><path d="M4.4 7.4 L1 10.8" stroke="#555" stroke-width="1.6" stroke-linecap="round"/></svg>
<svg class="a" style="left:32px;top:70px" width="32" height="24" viewBox="0 0 32 24"><path d="M1 1 V10 M29.5 1 V10" stroke="#6f6f6f" stroke-width="1.3"/><path d="M1.5 5.6 H29 M5.5 2.2 L1.8 5.6 L5.5 9 M25 2.2 L28.7 5.6 L25 9" fill="none" stroke="#6f6f6f" stroke-width="1.5"/><rect x="0.7" y="13.8" width="29" height="9" fill="#f7f7f7" stroke="#6f6f6f" stroke-width="1"/><rect x="1.2" y="14.3" width="9.2" height="4" fill="#5aa9e0"/><rect x="20" y="14.3" width="9.2" height="4" fill="#5aa9e0"/><rect x="10.4" y="18.3" width="9.6" height="4" fill="#5aa9e0"/></svg>
<svg class="a" style="left:0px;top:0px" width="1" height="1" viewBox="0 0 1 1"><g transform="translate(79.8,68.3)"><rect x="0.5" y="0.5" width="14" height="14" rx="1" fill="#bfe3f8" stroke="#4ba3de" stroke-width="1"/><rect x="1" y="4" width="3.5" height="10.5" fill="#8a8a8a"/><rect x="2" y="9" width="2" height="4" fill="#ddd"/><rect x="4.5" y="2.5" width="2" height="12" fill="#b5b5b5"/><path d="M7 4 L10.5 2 L10.5 14.5 L7 14.5 Z" fill="#3b8fd4"/><rect x="10.5" y="8" width="4" height="6.5" fill="#e9a040"/></g><g transform="translate(79.8,92.9)"><rect x="0.5" y="0.5" width="14" height="14" rx="1" fill="#bfe3f8" stroke="#4ba3de" stroke-width="1"/><rect x="1" y="8.5" width="3" height="6" fill="#8a8a8a"/><path d="M4.5 9 L8 7 L8 14.5 L4.5 14.5 Z" fill="#3b8fd4"/><rect x="8" y="11" width="2.5" height="3.5" fill="#e9a040"/><rect x="10.8" y="3" width="3.4" height="11.5" fill="#c4c4c4"/><rect x="0.5" y="14" width="14" height="1" fill="#888"/></g></svg>
<svg class="a" style="left:274.5px;top:74.5px" width="9" height="5" viewBox="0 0 9 5"><path d="M0.5 0.5 L4 4 L7.5 0.5" fill="none" stroke="#444" stroke-width="1.2"/></svg>
<svg class="a" style="left:274.5px;top:98.8px" width="9" height="5" viewBox="0 0 9 5"><path d="M0.5 0.5 L4 4 L7.5 0.5" fill="none" stroke="#444" stroke-width="1.2"/></svg>
<svg class="a" style="left:301px;top:69.5px" width="16" height="14" viewBox="0 0 16 14"><rect x="1" y="1" width="10" height="10" fill="none" stroke="#9a9a9a" stroke-width="1.2"/><rect x="3.5" y="3.5" width="10.5" height="9.5" fill="#ecdf9a" stroke="#8f8f8f" stroke-width="1.2"/><rect x="5" y="5" width="5" height="5" fill="#8fc08f"/></svg>
<svg class="a" style="left:301px;top:92px" width="17" height="17" viewBox="0 0 17 17"><path d="M0.5 1 Q5 0.3 10 0.8 L10.3 11 L1 11.2 Z" fill="#e6d77a"/><path d="M4 5 Q9 4.2 14 5 L15.5 14.8 Q9 15.5 3.5 15.5 Z" fill="#bfe3f8" stroke="#7cc4ef" stroke-width="0.8"/><path d="M4.3 5 Q7 4.6 10 4.7 L10.3 11 L4 11.2 Z" fill="#b39ae6"/></svg>
<svg class="a" style="left:301px;top:116px" width="17" height="17" viewBox="0 0 17 17"><circle cx="5.5" cy="6.5" r="5" fill="#f6cc9a" stroke="#efb070" stroke-width="0.8"/><circle cx="9.5" cy="11" r="5" fill="#bfe3f8" stroke="#7cc4ef" stroke-width="0.8"/><path d="M5.2 8.2 A5 5 0 0 1 10.4 6.1 A5 5 0 0 1 9.8 9.6 A5 5 0 0 1 5 10.3 Z" fill="#b39ae6"/></svg>
<svg class="a" style="left:471px;top:74.5px" width="9" height="5" viewBox="0 0 9 5"><path d="M0.5 0.5 L4 4 L7.5 0.5" fill="none" stroke="#444" stroke-width="1.2"/></svg>
<svg class="a" style="left:471px;top:99px" width="9" height="5" viewBox="0 0 9 5"><path d="M0.5 0.5 L4 4 L7.5 0.5" fill="none" stroke="#999" stroke-width="1.2"/></svg>
<svg class="a" style="left:471px;top:123px" width="9" height="5" viewBox="0 0 9 5"><path d="M0.5 0.5 L4 4 L7.5 0.5" fill="none" stroke="#999" stroke-width="1.2"/></svg>
<svg class="a" style="left:503px;top:78.5px" width="16" height="15" viewBox="0 0 16 15"><rect x="0.7" y="0.7" width="14" height="13.5" rx="1" fill="#fff" stroke="#6f6f6f" stroke-width="1.3"/><path d="M1.5 3 L7 2.5 L9 4 L14 2.5 V6.5 H1.5 Z" fill="#8cc48c"/><path d="M9 2.5 H14 V6.5 H9 Z" fill="#d6eefa"/><rect x="0.7" y="7" width="14" height="1.2" fill="#6f6f6f"/><path d="M1.5 9 L5 9 L7.5 12.5 L10 9 L14 9 V13.5 H1.5 Z" fill="#5aa9e0"/><path d="M6 9 L9 9 L7.5 11 Z" fill="#555"/><path d="M6 5.5 L9 5.5 L7.5 4 Z" fill="#555"/></svg>
<svg class="a" style="left:503px;top:108px" width="16" height="15" viewBox="0 0 16 15"><path d="M0.5 1 Q7 0 15 0.8 L15.2 13.2 Q8 12.6 0 13.6 Z" fill="#e3cf55"/><circle cx="7.5" cy="10" r="4.3" fill="#fff" stroke="#888" stroke-width="1"/><path d="M7.3 7.5 V10.3 H9.5" fill="none" stroke="#b05a20" stroke-width="0.9"/></svg>
<svg class="a" style="left:618px;top:106px" width="10" height="19" viewBox="0 0 10 19"><path d="M1 5 L4.5 1.5 L8 5" fill="none" stroke="#555" stroke-width="1.1"/><path d="M1 12.5 L4.5 16 L8 12.5" fill="none" stroke="#555" stroke-width="1.1"/></svg>
<svg class="a" style="left:0px;top:0px" width="1" height="1" viewBox="0 0 1 1"><path d="M672.5 71.8 Q683 73.5 693.4 70.3 Q694.5 82 697 93.3 Q684 91.5 669.2 93.8 Q671.5 82 672.5 71.8 Z" fill="#e5d35e"/><path d="M692 79.5 L680.5 91.2" stroke="#fff" stroke-width="3.6" stroke-linecap="round" opacity="0.5"/><path d="M692 79.5 L680.5 91.2" stroke="#6e6e6e" stroke-width="2.4" stroke-linecap="round"/><path d="M680.8 90.5 Q677 91.3 675.2 97.2 Q680 96.5 682.3 92.2 Z" fill="#b27d40"/></svg>
<svg class="a" style="left:677.5px;top:120.5px" width="9" height="5" viewBox="0 0 9 5"><path d="M0.5 0.5 L4 4 L7.5 0.5" fill="none" stroke="#444" stroke-width="1.2"/></svg>
<svg class="a" style="left:808px;top:69px" width="17" height="14" viewBox="0 0 17 14"><rect x="0" y="0.0" width="4" height="3.4" fill="#ebb0b0"/><rect x="0" y="3.4" width="4" height="3.4" fill="#f6cccc"/><rect x="0" y="6.8" width="4" height="3.4" fill="#ebb0b0"/><rect x="0" y="10.2" width="4" height="3.4" fill="#f6cccc"/><rect x="4" y="0.0" width="4" height="3.4" fill="#f6cccc"/><rect x="4" y="3.4" width="4" height="3.4" fill="#ebb0b0"/><rect x="4" y="6.8" width="4" height="3.4" fill="#f6cccc"/><rect x="4" y="10.2" width="4" height="3.4" fill="#ebb0b0"/><rect x="8" y="0.0" width="4" height="3.4" fill="#ebb0b0"/><rect x="8" y="3.4" width="4" height="3.4" fill="#f6cccc"/><rect x="8" y="6.8" width="4" height="3.4" fill="#ebb0b0"/><rect x="8" y="10.2" width="4" height="3.4" fill="#f6cccc"/><rect x="12" y="0.0" width="4" height="3.4" fill="#f6cccc"/><rect x="12" y="3.4" width="4" height="3.4" fill="#ebb0b0"/><rect x="12" y="6.8" width="4" height="3.4" fill="#f6cccc"/><rect x="12" y="10.2" width="4" height="3.4" fill="#ebb0b0"/></svg>
<svg class="a" style="left:827.5px;top:74.5px" width="9" height="5" viewBox="0 0 9 5"><path d="M0.5 0.5 L4 4 L7.5 0.5" fill="none" stroke="#333" stroke-width="1.3"/></svg>
<svg class="a" style="left:0px;top:0px" width="1" height="1" viewBox="0 0 1 1"><rect x="861" y="68.5" width="14.5" height="1" fill="#e58a6c"/><path d="M868 76.5 V71" stroke="#6f6f6f" stroke-width="1.1"/><path d="M866 73 L868 70.8 L870 73 Z" fill="#6f6f6f"/><rect x="861" y="77" width="1" height="1.2" fill="#86c3ec"/><rect x="861" y="79" width="1" height="1.2" fill="#86c3ec"/><rect x="861" y="81" width="1" height="1.2" fill="#86c3ec"/><rect x="861" y="83" width="1" height="1.2" fill="#86c3ec"/><rect x="863" y="77" width="1" height="1.2" fill="#86c3ec"/><rect x="863" y="79" width="1" height="1.2" fill="#86c3ec"/><rect x="863" y="81" width="1" height="1.2" fill="#86c3ec"/><rect x="863" y="83" width="1" height="1.2" fill="#86c3ec"/><rect x="865" y="77" width="1" height="1.2" fill="#86c3ec"/><rect x="865" y="79" width="1" height="1.2" fill="#86c3ec"/><rect x="865" y="81" width="1" height="1.2" fill="#86c3ec"/><rect x="865" y="83" width="1" height="1.2" fill="#86c3ec"/><rect x="867" y="77" width="1" height="1.2" fill="#86c3ec"/><rect x="867" y="79" width="1" height="1.2" fill="#86c3ec"/><rect x="867" y="81" width="1" height="1.2" fill="#86c3ec"/><rect x="867" y="83" width="1" height="1.2" fill="#86c3ec"/><rect x="869" y="77" width="1" height="1.2" fill="#86c3ec"/><rect x="869" y="79" width="1" height="1.2" fill="#86c3ec"/><rect x="869" y="81" width="1" height="1.2" fill="#86c3ec"/><rect x="869" y="83" width="1" height="1.2" fill="#86c3ec"/><rect x="871" y="77" width="1" height="1.2" fill="#86c3ec"/><rect x="871" y="79" width="1" height="1.2" fill="#86c3ec"/><rect x="871" y="81" width="1" height="1.2" fill="#86c3ec"/><rect x="871" y="83" width="1" height="1.2" fill="#86c3ec"/><rect x="873" y="77" width="1" height="1.2" fill="#86c3ec"/><rect x="873" y="79" width="1" height="1.2" fill="#86c3ec"/><rect x="873" y="81" width="1" height="1.2" fill="#86c3ec"/><rect x="873" y="83" width="1" height="1.2" fill="#86c3ec"/><rect x="875" y="77" width="1" height="1.2" fill="#86c3ec"/><rect x="875" y="79" width="1" height="1.2" fill="#86c3ec"/><rect x="875" y="81" width="1" height="1.2" fill="#86c3ec"/><rect x="875" y="83" width="1" height="1.2" fill="#86c3ec"/></svg>
<svg class="a" style="left:0px;top:0px" width="1" height="1" viewBox="0 0 1 1"><path d="M862 93.2 H867.5 M865.5 91.2 L867.5 93.2 L865.5 95.2" fill="none" stroke="#555" stroke-width="1"/><rect x="862" y="102" width="1" height="1.2" fill="#86c3ec"/><rect x="864" y="102" width="1" height="1.2" fill="#86c3ec"/><rect x="864" y="100" width="1" height="1.2" fill="#86c3ec"/><rect x="866" y="102" width="1" height="1.2" fill="#86c3ec"/><rect x="866" y="100" width="1" height="1.2" fill="#86c3ec"/><rect x="866" y="98" width="1" height="1.2" fill="#86c3ec"/><rect x="868" y="102" width="1" height="1.2" fill="#86c3ec"/><rect x="868" y="100" width="1" height="1.2" fill="#86c3ec"/><rect x="868" y="98" width="1" height="1.2" fill="#86c3ec"/><rect x="868" y="96" width="1" height="1.2" fill="#86c3ec"/><rect x="870" y="102" width="1" height="1.2" fill="#86c3ec"/><rect x="870" y="100" width="1" height="1.2" fill="#86c3ec"/><rect x="870" y="98" width="1" height="1.2" fill="#86c3ec"/><rect x="870" y="96" width="1" height="1.2" fill="#86c3ec"/><rect x="870" y="94" width="1" height="1.2" fill="#86c3ec"/><rect x="872" y="102" width="1" height="1.2" fill="#86c3ec"/><rect x="872" y="100" width="1" height="1.2" fill="#86c3ec"/><rect x="872" y="98" width="1" height="1.2" fill="#86c3ec"/><rect x="872" y="96" width="1" height="1.2" fill="#86c3ec"/><rect x="872" y="94" width="1" height="1.2" fill="#86c3ec"/><rect x="872" y="92" width="1" height="1.2" fill="#86c3ec"/><rect x="874" y="102" width="1" height="1.2" fill="#86c3ec"/><rect x="874" y="100" width="1" height="1.2" fill="#86c3ec"/><rect x="874" y="98" width="1" height="1.2" fill="#86c3ec"/><rect x="874" y="96" width="1" height="1.2" fill="#86c3ec"/><rect x="874" y="94" width="1" height="1.2" fill="#86c3ec"/><rect x="874" y="92" width="1" height="1.2" fill="#86c3ec"/><rect x="874" y="90" width="1" height="1.2" fill="#86c3ec"/><rect x="876" y="102" width="1" height="1.2" fill="#86c3ec"/><rect x="876" y="100" width="1" height="1.2" fill="#86c3ec"/><rect x="876" y="98" width="1" height="1.2" fill="#86c3ec"/><rect x="876" y="96" width="1" height="1.2" fill="#86c3ec"/><rect x="876" y="94" width="1" height="1.2" fill="#86c3ec"/><rect x="876" y="92" width="1" height="1.2" fill="#86c3ec"/><rect x="876" y="90" width="1" height="1.2" fill="#86c3ec"/><rect x="876" y="88" width="1" height="1.2" fill="#86c3ec"/></svg>
<svg class="a" style="left:10px;top:195px" width="14" height="15" viewBox="0 0 14 15"><path d="M0.8 0.8 H12.6 L8.2 6 V14.5 H5.2 V6 Z" fill="#a8a8a8" stroke="#6e6e6e" stroke-width="1.1" stroke-linejoin="round"/></svg>
<svg class="a" style="left:324px;top:197px" width="13" height="12" viewBox="0 0 13 12"><circle cx="7.5" cy="4.5" r="3.5" fill="none" stroke="#555" stroke-width="1.4"/><path d="M5 7 L1 11" stroke="#555" stroke-width="1.6" stroke-linecap="round"/></svg>
<svg class="a" style="left:346px;top:200px" width="9" height="5" viewBox="0 0 9 5"><path d="M0.5 0.5 L4 4 L7.5 0.5" fill="none" stroke="#777" stroke-width="1.1"/></svg>
<svg class="a" style="left:313px;top:174px" width="9" height="5" viewBox="0 0 9 5"><path d="M0.5 0.5 L4 4 L7.5 0.5" fill="none" stroke="#555" stroke-width="1.2"/></svg>
<svg class="a" style="left:330px;top:170px" width="9" height="11" viewBox="0 0 9 11"><rect x="2" y="1" width="4.5" height="6" fill="none" stroke="#555" stroke-width="1.2"/><path d="M0.5 7.3 H8 M4.2 7.3 V10.5" stroke="#555" stroke-width="1.2"/></svg>
<svg class="a" style="left:347px;top:171px" width="10" height="10" viewBox="0 0 10 10"><path d="M0.7 0.7 L9 9 M9 0.7 L0.7 9" stroke="#555" stroke-width="1.3"/></svg>
<svg class="a" style="left:24px;top:222px" width="24" height="23" viewBox="0 0 24 23"><path d="M1 1.5 H9.5 L10 8 H0.8 Z" fill="#e4cf50"/><path d="M5.5 8 V19.5 H14 M5.5 12 H14" fill="none" stroke="#666" stroke-width="1.2"/><path d="M13.5 9.5 H21.5 L22 14 H13.7 Z" fill="#e4cf50"/><path d="M13.5 17 H21.5 L22 21.5 H13.7 Z" fill="#e4cf50"/></svg>
<svg class="a" style="left:55px;top:224px" width="21" height="20" viewBox="0 0 21 20"><path d="M0.7 4.2 V16 Q10 22 19.5 16 V4.2 Z" fill="#efefef" stroke="#8a8a8a" stroke-width="1.1"/><path d="M13.2 7.3 V19 Q17.5 18 19 16 V6 Z" fill="#dcdcdc"/><ellipse cx="10.1" cy="4" rx="9.4" ry="3.1" fill="#f7f7f7" stroke="#8a8a8a" stroke-width="1.1"/></svg>
<svg class="a" style="left:86px;top:224px" width="20" height="20" viewBox="0 0 20 20"><rect x="0.6" y="0.6" width="18" height="18" rx="2" fill="#f5f5f5" stroke="#777" stroke-width="1.1"/><path d="M1.2 1.2 H6 Q8 5 7.8 9 Q8.5 14 11.5 18 H1.2 Z" fill="#a7dcf2"/><path d="M6 1.2 Q8 5 7.8 9 Q8.5 14 11.5 18 M8 8.5 Q12 4.5 18.4 5.5" fill="none" stroke="#999" stroke-width="1"/></svg>
<svg class="a" style="left:116px;top:224px" width="20" height="20" viewBox="0 0 20 20"><path d="M1 18 L16 3" stroke="#dcc63f" stroke-width="3.2"/><path d="M14.5 4.5 L16.5 2.5" stroke="#555" stroke-width="3.2"/><path d="M16.3 2.7 L17.6 1.4" stroke="#f0a090" stroke-width="3.2"/><path d="M0.5 18.8 L2 17" stroke="#444" stroke-width="1.2"/></svg>
<svg class="a" style="left:144px;top:222px" width="24" height="24" viewBox="0 0 24 24"><path d="M1.5 1.5 H16.5 V9 M1.5 1.5 V16.5 H9 M9 1.5 V16.5 M1.5 9 H16.5" fill="none" stroke="#8a8a8a" stroke-width="1.2"/><path d="M16.5 11 V22 M11 16.5 H22" stroke="#aee0fa" stroke-width="3"/><path d="M16.5 11 V22 M11 16.5 H22" stroke="#555" stroke-width="1.2"/></svg>
<svg class="a" style="left:175px;top:222px" width="22" height="22" viewBox="0 0 22 22"><path d="M10.5 1.2 L20.5 9.5 L10.5 20.5 L4 19.5 L1.5 12.8 Z" fill="#f2e3a0" stroke="#c89a5a" stroke-width="0.9"/><circle cx="6.8" cy="16" r="2" fill="#fff" stroke="#c89a5a" stroke-width="0.9"/><path d="M6.5 16.5 Q3 18 0.5 21" fill="none" stroke="#777" stroke-width="1"/><path d="M9 9 L15 4.8 M10.5 11 L16.5 6.8 M12 13 L18 8.8" stroke="#e0c878" stroke-width="0.7"/></svg>
<svg class="a" style="left:9.5px;top:295.8px" width="5.5" height="5.5" viewBox="0 0 5.5 5.5"><path d="M5.5 0 L5.5 5.5 L0 5.5 Z" fill="#606060"/></svg>
<svg class="a" style="left:20.0px;top:318.3px" width="5.5" height="5.5" viewBox="0 0 5.5 5.5"><path d="M5.5 0 L5.5 5.5 L0 5.5 Z" fill="#606060"/></svg>
<svg class="a" style="left:30.5px;top:340.3px" width="5.5" height="5.5" viewBox="0 0 5.5 5.5"><path d="M5.5 0 L5.5 5.5 L0 5.5 Z" fill="#606060"/></svg>
<svg class="a" style="left:20.0px;top:546.8px" width="5.5" height="5.5" viewBox="0 0 5.5 5.5"><path d="M5.5 0 L5.5 5.5 L0 5.5 Z" fill="#606060"/></svg>
<svg class="a" style="left:20.0px;top:593.3px" width="5.5" height="5.5" viewBox="0 0 5.5 5.5"><path d="M5.5 0 L5.5 5.5 L0 5.5 Z" fill="#606060"/></svg>
<svg class="a" style="left:31.0px;top:615.5px" width="5.5" height="5.5" viewBox="0 0 5.5 5.5"><path d="M5.5 0 L5.5 5.5 L0 5.5 Z" fill="#606060"/></svg>
<svg class="a" style="left:19.5px;top:289px" width="16" height="17" viewBox="0 0 16 17"><path d="M0.3 16.8 L3 11.5 H13 L15.7 16.8 Z" fill="#7dbb6c"/><rect x="2.6" y="1.6" width="4.6" height="13.2" rx="1.6" fill="#f4f4f4" stroke="#6f6f6f" stroke-width="0.9"/><rect x="8.7" y="5.2" width="4.6" height="9.6" rx="0.6" fill="#f4f4f4" stroke="#6f6f6f" stroke-width="0.9"/><path d="M9.6 5.3 L11 1.2 L12.4 5.3 Z" fill="#6f6f6f"/></svg>
<svg class="a" style="left:41px;top:337.8px" width="12.5" height="12.5" viewBox="0 0 12.5 12.5"><rect x="0.5" y="0.5" width="11.5" height="11.5" rx="0" fill="#fff" stroke="#bdbdbd" stroke-width="1"/><path d="M2.6 7 L5.4 9.6 L10.6 4.2" fill="none" stroke="#505050" stroke-width="1.8" stroke-linecap="round" stroke-linejoin="round"/></svg>
<svg class="a" style="left:375px;top:164px" width="16" height="17" viewBox="0 0 16 17"><path d="M0.3 16.8 L3 11.5 H13 L15.7 16.8 Z" fill="#7dbb6c"/><rect x="2.6" y="1.6" width="4.6" height="13.2" rx="1.6" fill="#f4f4f4" stroke="#6f6f6f" stroke-width="0.9"/><rect x="8.7" y="5.2" width="4.6" height="9.6" rx="0.6" fill="#f4f4f4" stroke="#6f6f6f" stroke-width="0.9"/><path d="M9.6 5.3 L11 1.2 L12.4 5.3 Z" fill="#6f6f6f"/></svg>
<svg class="a" style="left:432.5px;top:168.5px" width="9" height="9" viewBox="0 0 9 9"><path d="M0.5 0.5 L8.5 8.5 M8.5 0.5 L0.5 8.5" stroke="#6a6a6a" stroke-width="1.1"/></svg>
<svg class="a" style="left:0px;top:0px" width="1" height="1" viewBox="0 0 1 1"><g transform="translate(453,166)"><rect x="4" y="0" width="6" height="2.5" rx="0.8" fill="#4ba3de"/><rect x="0" y="1.8" width="14.8" height="10.2" rx="1.2" fill="#4ba3de"/><rect x="1" y="3.8" width="12.8" height="1.3" fill="#fff"/><path d="M5.6240000000000006 12 Q9.620000000000001 5.4 13.8 6.0 L13.8 12 Z" fill="#d6eefa"/><path d="M9.176 7.4399999999999995 Q11.840000000000002 5.76 13.8 6.0 L13.8 11 Z" fill="#a8d48a"/></g></svg>
<svg class="a" style="left:994.7px;top:315.6px" width="11" height="11" viewBox="0 0 11 11"><path d="M0.5 0.5 L10 10 M10 0.5 L0.5 10" stroke="#444" stroke-width="1.1"/></svg>
<svg class="a" style="left:436px;top:349px" width="12" height="12" viewBox="0 0 12 12"><path d="M7 1.5 Q7.4 5 10.8 5.5 Q7.4 6 7 9.5 Q6.6 6 3.2 5.5 Q6.6 5 7 1.5 Z" fill="none" stroke="#9a9a9a" stroke-width="0.8"/><path d="M2 0 V3 M0.5 1.5 H3.5 M2 8 V11 M0.5 9.5 H3.5" stroke="#a0a0a0" stroke-width="0.8"/></svg>
<svg class="a" style="left:546px;top:349px" width="12" height="12" viewBox="0 0 12 12"><circle cx="7" cy="4.5" r="3.5" fill="none" stroke="#444" stroke-width="1.4"/><path d="M4.5 7 L1 10.5" stroke="#444" stroke-width="1.6" stroke-linecap="round"/></svg>
<svg class="a" style="left:568px;top:353px" width="9" height="5" viewBox="0 0 9 5"><path d="M0.5 0.5 L4 4 L7.5 0.5" fill="none" stroke="#666" stroke-width="1.1"/></svg>
</body></html>
